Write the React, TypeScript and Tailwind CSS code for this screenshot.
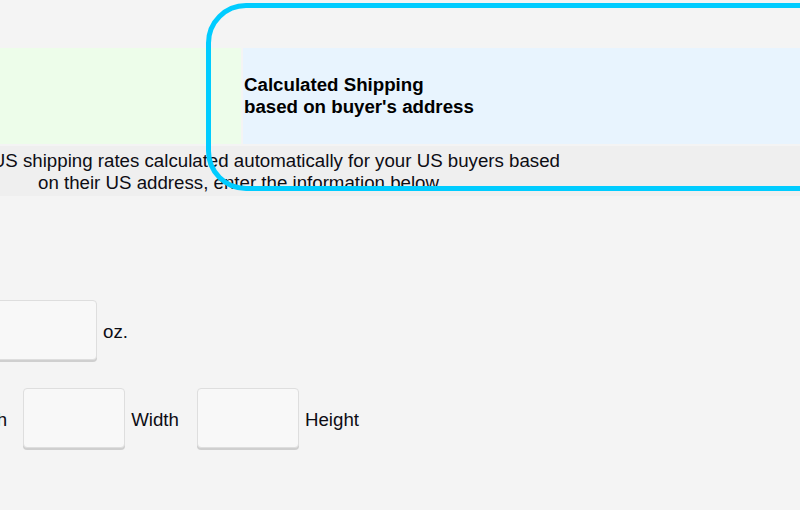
import React from 'react';

function Box() {
  return (
    <input
      type="text"
      className="w-[102px] h-[60px] bg-[#f8f8f8] border border-[#dedede] rounded-[4px] shadow-[0_2px_0_#cfcfcf] outline-none"
    />
  );
}

export default function App() {
  return (
    <div
      className="relative w-[800px] h-[510px] overflow-hidden bg-[#f4f4f4] text-[18.7px] leading-[22px] text-[#0d0d14]"
      style={{ fontFamily: '"Liberation Sans", Arial, sans-serif' }}
    >
      <div className="-ml-[100px] w-[900px] pt-[48px]">
        {/* shipping type panels */}
        <div className="flex gap-[2px] h-[96px]">
          <div className="w-[341px] bg-[#edfdea]" />
          <div className="flex-1 bg-[#e8f4fe] flex items-center pl-[1px]">
            <div className="font-bold text-black">
              Calculated Shipping
              <br />
              based on buyer's address
            </div>
          </div>
        </div>

        {/* description */}
        <div className="mt-[2px] h-[50px] bg-[#efefef] pt-[4px] overflow-hidden">
          <div className="whitespace-nowrap pl-[43px]">
            Have US shipping rates calculated automatically for your US buyers based
          </div>
          <div className="whitespace-nowrap pl-[138px]">
            on their US address, enter the information below
          </div>
        </div>

        {/* weight */}
        <div className="mt-[104px] flex items-center gap-[6px] pl-[95px]">
          <Box />
          <span className="mt-[4px]">oz.</span>
        </div>

        {/* dimensions */}
        <div className="mt-[28px] flex items-center pl-[50px]">
          <span className="mr-[16px] mt-[4px]">Length</span>
          <Box />
          <span className="ml-[6px] mr-[18px] mt-[4px]">Width</span>
          <Box />
          <span className="ml-[6px] mt-[4px]">Height</span>
        </div>
      </div>

      {/* highlight ring */}
      <div className="absolute left-[206px] top-[3px] w-[660px] h-[188px] border-[5px] border-[#00ccff] rounded-[40px] pointer-events-none" />
    </div>
  );
}
